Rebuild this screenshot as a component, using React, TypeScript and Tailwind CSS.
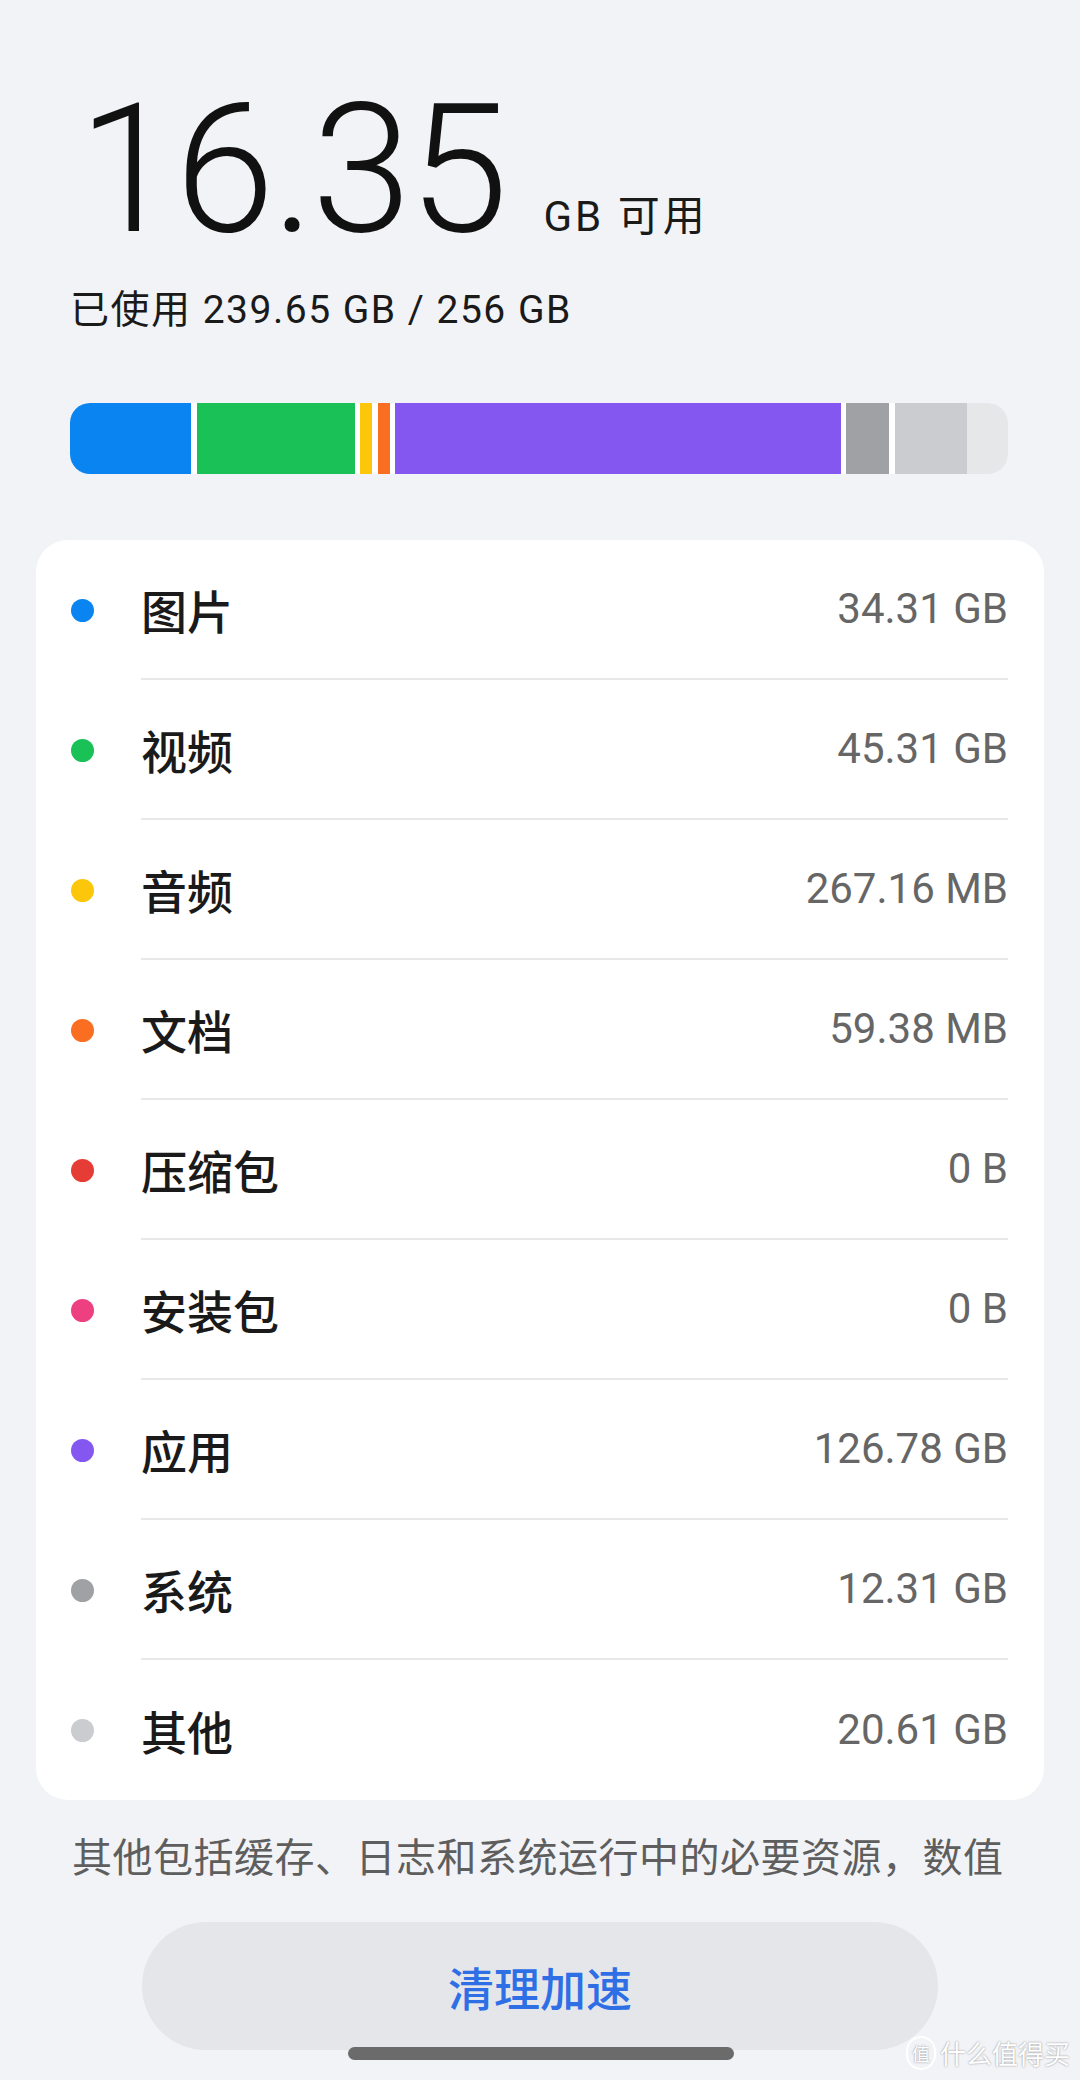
import React from "react";

const latin = { fontFamily: 'Roboto, "Noto Sans CJK SC", sans-serif' };

const rows: { label: string; value: string; color: string }[] = [
  { label: "图片", value: "34.31 GB", color: "bg-[#0a84f0]" },
  { label: "视频", value: "45.31 GB", color: "bg-[#1ac157]" },
  { label: "音频", value: "267.16 MB", color: "bg-[#fcc60a]" },
  { label: "文档", value: "59.38 MB", color: "bg-[#fa6e22]" },
  { label: "压缩包", value: "0 B", color: "bg-[#e63c36]" },
  { label: "安装包", value: "0 B", color: "bg-[#ee3f80]" },
  { label: "应用", value: "126.78 GB", color: "bg-[#8458f0]" },
  { label: "系统", value: "12.31 GB", color: "bg-[#a0a1a4]" },
  { label: "其他", value: "20.61 GB", color: "bg-[#cbccd0]" },
];

export default function App() {
  return (
    <div
      className="relative h-[2080px] w-[1080px] overflow-hidden bg-[#f1f3f6]"
      style={latin}
    >
      {/* Header */}
      <div className="px-[70px] pt-[80px]">
        <div className="flex items-baseline">
          <span className="ml-[8px] text-[180px] font-light leading-none tracking-[-3px] text-[#111]">
            16.35
          </span>
          <span className="ml-[38px] text-[42px] leading-none tracking-[3px] text-[#1a1a1a]">
            GB 可用
          </span>
        </div>
        <div className="mt-[26px] h-[48px] text-[39px] leading-[48px] tracking-[1.5px] text-[#1a1a1a]">
          已使用 239.65 GB / 256 GB
        </div>
      </div>

      {/* Bar */}
      <div className="mx-[70px] mt-[69px] flex h-[71px] w-[938px] overflow-hidden rounded-[20px] bg-white">
        <div className="w-[121px] bg-[#0a84f0]" />
        <div className="ml-[6px] w-[158px] bg-[#1ac157]" />
        <div className="ml-[5px] w-[12px] bg-[#fcc60a]" />
        <div className="ml-[6px] w-[12px] bg-[#fa6e22]" />
        <div className="ml-[5px] w-[446px] bg-[#8458f0]" />
        <div className="ml-[5px] w-[43px] bg-[#a0a1a4]" />
        <div className="ml-[6px] w-[72px] bg-[#cbccd0]" />
        <div className="w-[41px] bg-[#e6e7e9]" />
      </div>

      {/* Card */}
      <div className="mx-[36px] mt-[66px] overflow-hidden rounded-[32px] bg-white">
        {rows.map((r, i) => (
          <div key={r.label} className="flex h-[140px] items-center pl-[35px]">
            <div className={`h-[23px] w-[23px] shrink-0 rounded-full ${r.color}`} />
            <div
              className={`ml-[47px] mr-[36px] flex h-full flex-1 items-center justify-between ${
                i < rows.length - 1 ? "border-b-2 border-[#e8e8ea]" : ""
              }`}
            >
              <span
                className="text-[46px] font-medium leading-none text-[#1a1a1a]"
                style={{ fontFamily: '"Noto Sans CJK SC", sans-serif' }}
              >
                {r.label}
              </span>
              <span className="text-[42px] leading-none text-[#666666]">
                {r.value}
              </span>
            </div>
          </div>
        ))}
      </div>

      {/* Footnote */}
      <div
        className="mt-[27px] whitespace-nowrap px-[72px] text-[40px] leading-[56px] tracking-[0.5px] text-[#5e5e5e]"
        style={{ fontFamily: '"Noto Sans CJK SC", sans-serif' }}
      >
        其他包括缓存、日志和系统运行中的必要资源，数值
      </div>

      {/* Button */}
      <div className="mx-auto mt-[39px] flex h-[128px] w-[796px] items-center justify-center rounded-full bg-[#e5e6ea]">
        <span
          className="text-[46px] font-medium leading-none text-[#2f6fe6]"
          style={{ fontFamily: '"Noto Sans CJK SC", sans-serif' }}
        >
          清理加速
        </span>
      </div>

      {/* Home indicator */}
      <div className="absolute left-[348px] top-[2047px] h-[13px] w-[386px] rounded-full bg-[#6b6b6b]" />

      {/* Watermark */}
      <div className="absolute right-[10px] top-[2036px] flex items-center gap-[4px] text-white [text-shadow:0_0_2px_rgba(0,0,0,0.45)]">
        <span
          className="flex h-[34px] w-[30px] items-center justify-center rounded-full border-2 border-white text-[18px] leading-none"
          style={{ fontFamily: '"Noto Sans CJK SC", sans-serif' }}
        >
          值
        </span>
        <span
          className="text-[26px] leading-none"
          style={{ fontFamily: '"Noto Sans CJK SC", sans-serif' }}
        >
          什么值得买
        </span>
      </div>
    </div>
  );
}
